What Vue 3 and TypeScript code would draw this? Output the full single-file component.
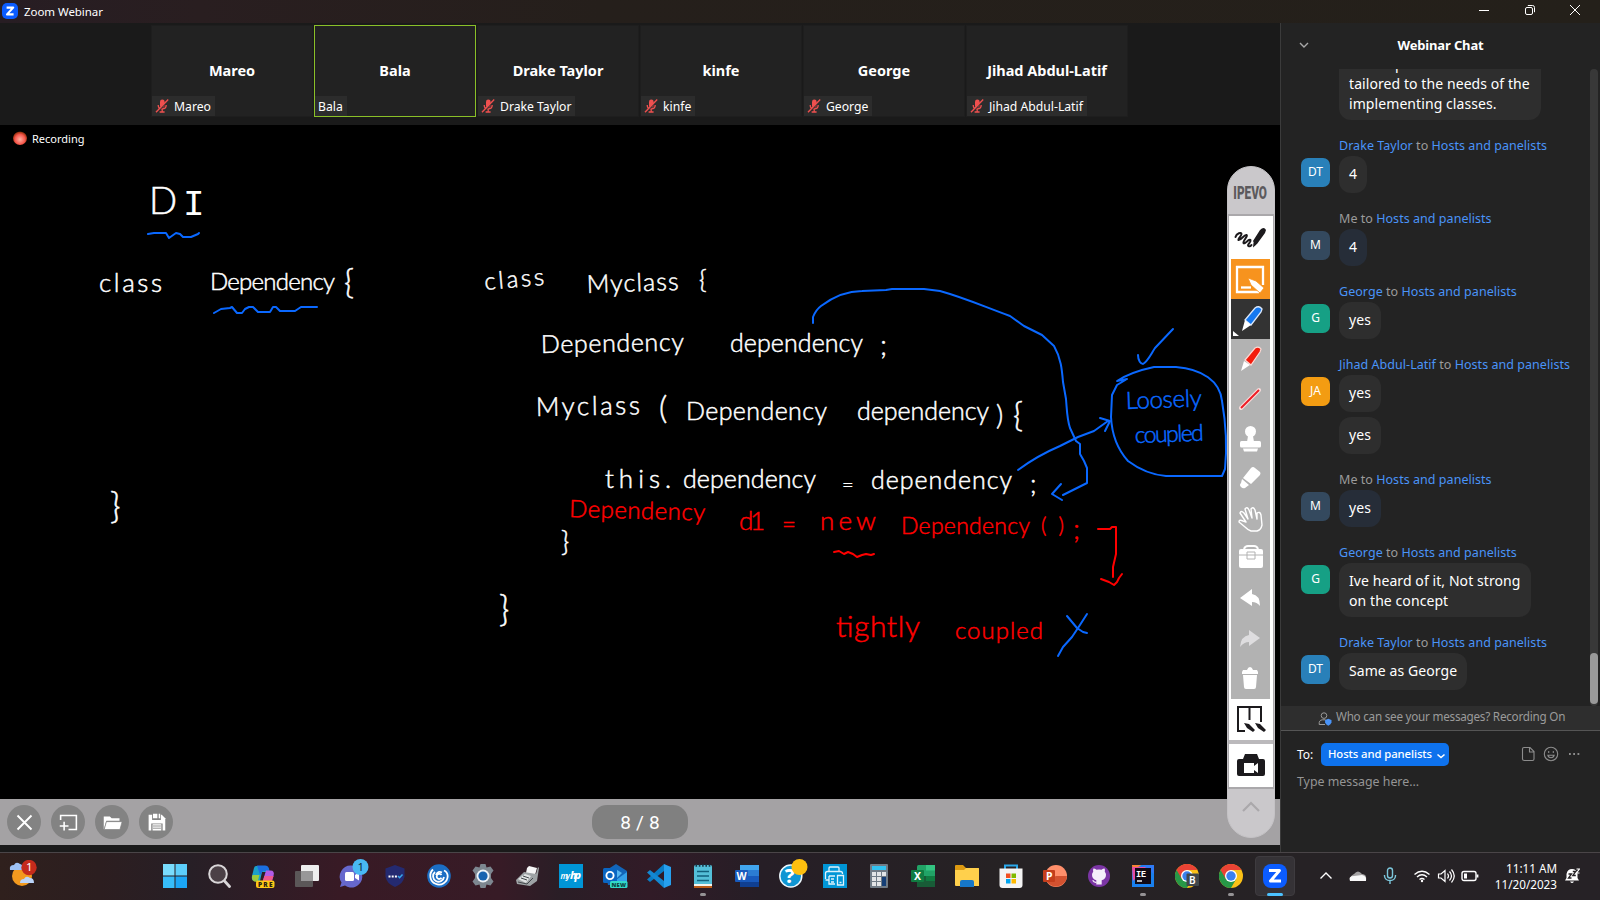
<script setup lang="ts">
interface Participant { name: string; muted: boolean; active?: boolean }
interface Group { from: string; mine?: boolean; initials: string; color: string; texts: string[] }
interface Note { t: string; x: number; y: number; w: number; s: number; c?: string; r?: number }

const participants: Participant[] = [
  { name: 'Mareo', muted: true },
  { name: 'Bala', muted: false, active: true },
  { name: 'Drake Taylor', muted: true },
  { name: 'kinfe', muted: true },
  { name: 'George', muted: true },
  { name: 'Jihad Abdul-Latif', muted: true },
]

const groups: Group[] = [
  { from: 'Drake Taylor', initials: 'DT', color: 'blue', texts: ['4'] },
  { from: 'Me', mine: true, initials: 'M', color: 'slate', texts: ['4'] },
  { from: 'George', initials: 'G', color: 'green', texts: ['yes'] },
  { from: 'Jihad Abdul-Latif', initials: 'JA', color: 'orange', texts: ['yes', 'yes'] },
  { from: 'Me', mine: true, initials: 'M', color: 'slate', texts: ['yes'] },
  { from: 'George', initials: 'G', color: 'green', texts: ['Ive heard of it, Not strong\non the concept'] },
  { from: 'Drake Taylor', initials: 'DT', color: 'blue', texts: ['Same as George'] },
]

const notes: Note[] = [
  { t: 'D', x: 149, y: 214, w: 0, s: 37 },
  { t: 'I', x: 183, y: 215, w: 0, s: 36, c: 'serifed' },
  { t: 'class', x: 99, y: 292, w: 63, s: 26 },
  { t: 'Dependency', x: 210, y: 290, w: 125, s: 24 },
  { t: '{', x: 344, y: 294, w: 0, s: 34 },
  { t: '}', x: 110, y: 518, w: 0, s: 36 },
  { t: 'class', x: 485, y: 290, w: 60, s: 24, r: -5 },
  { t: 'Myclass', x: 587, y: 293, w: 92, s: 25, r: -2 },
  { t: '{', x: 699, y: 289, w: 0, s: 26 },
  { t: 'Dependency', x: 541, y: 353, w: 143, s: 25, r: -1 },
  { t: 'dependency', x: 730, y: 352, w: 133, s: 25 },
  { t: ';', x: 880, y: 355, w: 0, s: 28 },
  { t: 'Myclass', x: 536, y: 416, w: 104, s: 26, r: -1 },
  { t: '(', x: 659, y: 419, w: 0, s: 32 },
  { t: 'Dependency', x: 686, y: 420, w: 141, s: 25 },
  { t: 'dependency', x: 857, y: 420, w: 132, s: 25 },
  { t: ')', x: 996, y: 425, w: 0, s: 28 },
  { t: '{', x: 1013, y: 427, w: 0, s: 34 },
  { t: 'this.', x: 605, y: 488, w: 66, s: 26 },
  { t: 'dependency', x: 683, y: 488, w: 133, s: 25 },
  { t: '=', x: 842, y: 492, w: 0, s: 20 },
  { t: 'dependency', x: 871, y: 489, w: 141, s: 25 },
  { t: ';', x: 1030, y: 493, w: 0, s: 26 },
  { t: 'Dependency', x: 569, y: 517, w: 136, s: 24, c: 'red', r: 1.5 },
  { t: 'd1', x: 739, y: 530, w: 26, s: 26, c: 'red' },
  { t: '=', x: 782, y: 533, w: 0, s: 24, c: 'red' },
  { t: 'new', x: 820, y: 530, w: 56, s: 26, c: 'red' },
  { t: 'Dependency', x: 901, y: 534, w: 129, s: 23, c: 'red' },
  { t: '()', x: 1041, y: 533, w: 23, s: 21, c: 'red' },
  { t: ';', x: 1073, y: 539, w: 0, s: 28, c: 'red' },
  { t: '}', x: 561, y: 551, w: 0, s: 28 },
  { t: '}', x: 499, y: 621, w: 0, s: 35 },
  { t: 'tightly', x: 836, y: 637, w: 84, s: 30, c: 'red' },
  { t: 'coupled', x: 955, y: 639, w: 88, s: 24, c: 'red' },
  { t: 'Loosely', x: 1126, y: 409, w: 76, s: 24, c: 'ink', r: -2 },
  { t: 'coupled', x: 1135, y: 443, w: 69, s: 23, c: 'ink', r: -2 },
]
</script>

<template>
  <div class="screen">
    <header class="titlebar">
      <svg class="zlogo" viewBox="0 0 16 16"><rect width="16" height="16" rx="5" fill="#0b5cff" /><path d="M4.6 4.6h6.6l-6.2 6.8h6.6" fill="none" stroke="#fff" stroke-width="2.1" stroke-linejoin="round" /></svg>
      <span class="apptitle">Zoom Webinar</span>
      <div class="wincontrols">
        <svg viewBox="0 0 12 12"><path d="M1 6.5h10" /></svg>
        <svg viewBox="0 0 12 12"><rect x="1.5" y="3.5" width="7" height="7" rx="1.5" /><path d="M3.8 1.5h4.7a2 2 0 0 1 2 2v4.7" /></svg>
        <svg viewBox="0 0 12 12"><path d="M1 1l10 10M11 1L1 11" /></svg>
      </div>
    </header>

    <main class="body">
      <section class="meeting">
        <div class="gallery">
          <div v-for="p in participants" :key="p.name" class="tile" :class="{ active: p.active }">
            <div class="big">{{ p.name }}</div>
            <div class="tag">
              <svg v-if="p.muted" class="mic" viewBox="0 0 14 14"><rect x="5" y="0.6" width="4.6" height="8" rx="2.2" fill="#f0504f" /><path d="M3.2 6c0 5.200 8 5.200 8 0M7.200 10v3M4.600 13h5" fill="none" stroke="#f0504f" stroke-width="1.300" /><path d="M13.400 1.500L2.200 13.400" stroke="#2c2c2c" stroke-width="1.200" /><path d="M13.200 0.600L1 13.200" stroke="#f0504f" stroke-width="1.400" /></svg>
              <span>{{ p.name }}</span>
            </div>
          </div>
        </div>

        <div class="stage">
          <div class="recording"><i></i><span>Recording</span></div>
          <svg class="board" viewBox="0 125 1280 674">
            <text
              v-for="(n, i) in notes" :key="i" :x="n.x" :y="n.y" :font-size="n.s"
              :textLength="n.w || undefined" :class="n.c"
              :transform="n.r ? `rotate(${n.r} ${n.x} ${n.y})` : undefined"
            >{{ n.t }}</text>
            <g class="pen blue">
              <path d="M148 234l6-1h12l3 5 7-5 4 1 3 3h8l7-3 1-1" />
              <path d="M214 313l7-4 9-1 2-1 5 6h5l3-4 4-2h4l5 5h12l3-5h3l4 4h15l6-4h16" />
              <path d="M813 323v-6c2-5 4-8 8-11 12-9 27-15 41-15l24-1 6-1h32l16 2c25 7 40 14 70 25l14 10 18 9 12 11c7 12 8 24 9 36l3 17c1 12 1 20 4 29l6 13 4 3v10l4 7 3 7v15l-24 12" />
              <path d="M1061 484l-9 10 10 6" />
              <path d="M1018 470c16-12 28-18 42-24l18-9 16-6 14-10M1100 418l10 3-5 10" />
              <path d="M1127 379l-10 6-5 10-1 22c1 20 8 34 17 44 12 9 26 14 38 15h56l3-7c2-20 1-45-3-68-2-20-20-32-46-34h-22c-14 3-28 8-37 14l10-2" />
              <path d="M1138 355c0 6 3 9 5 9 5-3 8-10 12-16l18-19" />
              <path d="M1067 616l10 12 6 4 4 1M1087 614l-9 14-6 9-9 10-5 9" />
            </g>
            <g class="pen crimson">
              <path d="M834 552l5-1 5 3 4-2 5 2 4 3 5-2 4-1 5 1 3-1" />
              <path d="M1098 529h12l2-2h4v27l-3 13v10M1101 579l8 3 5 3 3-3 2-4 3-4" />
            </g>
          </svg>

          <div class="bottombar">
            <div class="round"><svg viewBox="0 0 24 24"><path d="M4 4l16 16M20 4L4 20" fill="none" stroke="#fff" stroke-width="2.200" /></svg></div>
            <div class="round"><svg viewBox="0 0 24 24"><path d="M3 9V4h18v16h-9M7 11v10M2 16h10" fill="none" stroke="#fff" stroke-width="1.800" /></svg></div>
            <div class="round"><svg viewBox="0 0 24 24"><path d="M2 20V5h7l2 2h9v3H5z" fill="#fff" /><path d="M5 11h18l-2.500 9H2.500z" fill="#fff" stroke="#838383" stroke-width=".8" /></svg></div>
            <div class="round"><svg viewBox="0 0 24 24"><path d="M3 3h15l4 4v14H3z" fill="#fff" /><path d="M7 2v7h10V2M6 22v-9h13v9" fill="#838383" /><path d="M8 2h5v5H8zM14.500 2h1.700v5h-1.700zM7.500 14h10v7h-10z" fill="#fff" /><path d="M8 16h9M8 18.500h9" stroke="#838383" /></svg></div>
            <div class="pages">8 / 8</div>
          </div>

          <aside class="tools">
            <div class="brand"><span>IPEVO</span></div>
            <div class="rack">
              <div class="tool white scribble"><svg viewBox="0 0 40 40"><path d="M4.500 18c1-4 6-5 6-3s-4 5-3 6c2 1 6-6 8-5s-4 6-3 8 6-5 7-3-4 5-2 6 2 0 3-1" fill="none" stroke="#1c1a1d" stroke-width="2" stroke-linejoin="round" stroke-linecap="round" /><path d="M22 22l7-11q4-4 6 0l-1 3-8 11-2 1zM22.500 23.500l3 2-3.500 3z" fill="#1c1a1d" /></svg></div>
              <div class="tool amber"><svg viewBox="0 0 40 40"><path d="M28 33H6V8h26v18" fill="none" stroke="#fff" stroke-width="2.300" /><path d="M10 28.500h10" stroke="#fff" stroke-width="2.300" /><path d="M17 19l8 3 8 7-4 5-9-8z" fill="#fff" stroke="#f7931e" stroke-width=".8" /></svg></div>
              <div class="tool dark"><svg viewBox="0 0 40 40"><path d="M14 21l10-12q4-3 7 1l-1 3-10 13z" fill="#1478f0" stroke="#dce8fa" stroke-width="1.300" /><path d="M14 21l6 5-9 6z" fill="#fff" /><path d="M2 32v5h6z" fill="#fff" /></svg></div>
              <div class="tool"><svg viewBox="0 0 40 40"><path d="M14 21l10-12q4-2 6 1l-1 3-9 13z" fill="#f31b0b" stroke="#fbd8d3" stroke-width="1.200" /><path d="M13 22l6 4-9 6z" fill="#fff" /></svg></div>
              <div class="tool"><svg viewBox="0 0 40 40"><path d="M10 29l18-18" stroke="#fbdedd" stroke-width="4" stroke-linecap="round" /><path d="M10 29l18-18" stroke="#ed1c24" stroke-width="2" /></svg></div>
              <div class="tool"><svg viewBox="0 0 40 40" fill="#fff"><circle cx="19.500" cy="12.500" r="5.500" /><path d="M17 17h5l1 6h-7z" /><rect x="9" y="22" width="21" height="6.500" rx="1.500" /><path d="M12 29.500h15l-1 3H13z" /></svg></div>
              <div class="tool"><svg viewBox="0 0 40 40" fill="#fff"><path d="M20 9q2-2 4 0l5 4q1 1 0 3l-9 9-8-6zM11 20l7 6-4 3q-2 1-4-1-2-2 0-4z" /></svg></div>
              <div class="tool"><svg viewBox="0 0 40 40" fill="none" stroke="#fff" stroke-width="1.400" stroke-linejoin="round"><path d="M14 28l-6-5q0-3 4-1l3 1-6-9q1-3 4 0l4 6-3-10q2-3 4 1l3 8-1-9q2-3 4 1l2 9 0-6q3-2 4 2l1 10q-1 5-5 6h-6q-3-1-6-4z" /></svg></div>
              <div class="tool"><svg viewBox="0 0 40 40"><path d="M13 10q1-3 4-3h6q3 0 4 3" fill="none" stroke="#fff" stroke-width="2" /><rect x="8" y="10" width="24" height="19" rx="2" fill="#fff" /><path d="M8 16h8v-3h8v3h8M16 16v4h8v-4z" fill="none" stroke="#b2b2b2" /></svg></div>
              <div class="tool"><svg viewBox="0 0 40 40" fill="#fff"><path d="M9 19l12-9v5q8 1 8 12-3-4-8-4v4z" /></svg></div>
              <div class="tool"><svg viewBox="0 0 40 40" fill="#dedddf"><path d="M29 19l-11-8v5q-8 1-9 12 4-5 9-5v4z" /></svg></div>
              <div class="tool"><svg viewBox="0 0 40 40" fill="#fff"><path d="M11 13l1-2h4q1-3 3-3t3 3h4l1 2v2H11zM12 16h14l-1 12q0 2-2 2h-8q-2 0-2-2z" /></svg></div>
              <div class="tool white split"><svg viewBox="0 0 40 40"><path d="M14 31H7V7h23v15M18.500 7v13" fill="none" stroke="#1c1a1d" stroke-width="2" /><path d="M13 23l5 1 6 6-2 2-6-4zM24 23l5 1 6 6-2 2-6-4z" fill="#1c1a1d" /></svg></div>
              <div class="tool white camera"><svg viewBox="0 0 40 40"><path d="M6 15q0-2 2-2h4l2-5h12l2 5h4q2 0 2 2v13q0 2-2 2H8q-2 0-2-2z" fill="#1c1a1d" /><path d="M13 17h10v3l4-3v10l-4-3v3H13z" fill="#fff" /></svg></div>
            </div>
            <div class="foot"><svg viewBox="0 0 20 20"><path d="M2 14l8-8 8 8" fill="none" stroke="#aaa8ab" stroke-width="2.200" /></svg></div>
          </aside>
        </div>
      </section>

      <aside class="chat">
        <div class="chathead">
          <svg viewBox="0 0 10 10"><path d="M1 3l4 4 4-4" fill="none" stroke="#a8a8a8" stroke-width="1.400" /></svg>
          <b>Webinar Chat</b>
        </div>
        <div class="scroll">
          <div class="list">
            <div class="group">
              <div class="bubble first"><span class="tail">p</span><br>tailored to the needs of the<br>implementing classes.</div>
            </div>
            <div v-for="(g, i) in groups" :key="i" class="group">
              <div class="who"><span :class="{ me: g.mine }">{{ g.from }}</span> to <span>Hosts and panelists</span></div>
              <div class="row">
                <div class="avatar" :class="g.color">{{ g.initials }}</div>
                <div class="stack">
                  <div v-for="(t, j) in g.texts" :key="j" class="bubble" :class="{ mine: g.mine }">{{ t }}</div>
                </div>
              </div>
            </div>
          </div>
          <div class="track"><div class="thumb"></div></div>
        </div>
        <div class="notice">
          <svg viewBox="0 0 14 14"><circle cx="6" cy="3.600" r="2.800" fill="none" stroke="#9a9a9a" /><path d="M7 12.500H1.200q-.5-4.500 3.300-4.700h3" fill="none" stroke="#9a9a9a" /><path d="M10.300 6.800l3.200 1.200v2.500q-.5 2-3.200 3.300-2.700-1.300-3.200-3.300V8z" fill="#4a94f8" /></svg>
          <span>Who can see your messages? Recording On</span>
        </div>
        <div class="compose">
          <div class="torow">
            <span class="to">To:</span>
            <div class="target"><span>Hosts and panelists</span><svg viewBox="0 0 10 10"><path d="M1.500 4.500l3.500 3 3.500-3" fill="none" stroke="#fff" stroke-width="1.600" /></svg></div>
            <div class="acts">
              <svg viewBox="0 0 16 16"><path d="M4 1.500h6l4 4V13q0 1.500-1.500 1.500h-8Q2.500 14.500 2.500 13V3Q2.500 1.500 4 1.500zM9.500 1.500V6H14" /></svg>
              <svg viewBox="0 0 16 16"><circle cx="8" cy="8" r="6.700" /><path d="M5.700 5v2M10.300 5v2M4.800 9.200h6.400q-.5 2.600-3.200 2.600t-3.200-2.600z" /></svg>
              <svg viewBox="0 0 16 16"><path d="M3 8h1.800M7.200 8H9M11.500 8h1.800" stroke-width="1.800" /></svg>
            </div>
          </div>
          <div class="ph">Type message here...</div>
        </div>
      </aside>
    </main>

    <footer class="taskbar">
      <div class="weather">
        <svg viewBox="0 0 28 28"><circle cx="13" cy="16" r="10" fill="#f39a1f" /><path d="M1 10q-1-5 4-5 2-4 6-1 3 0 3 6z" fill="#9dc1f5" /><path d="M11 23q0-4 4-4 2-4 6-1 4 0 4 5z" fill="#bcd5fa" /><circle cx="20" cy="7.500" r="7.700" fill="#c42b1c" /></svg>
        <span>1</span>
      </div>
      <div class="apps">
        <div class="app"><svg viewBox="0 0 24 24" fill="#37bdf9"><path d="M0 0h11.500v11.500H0z" fill="#79dcfd" /><path d="M12.500 0H24v11.500H12.500z" fill="#5ccefb" /><path d="M0 12.500h11.500V24H0z" /><path d="M12.500 12.500H24V24H12.500z" fill="#1ba6f5" /></svg></div>
        <div class="app"><svg viewBox="0 0 24 24"><circle cx="11" cy="10" r="8.800" fill="#4b4046" stroke="#d9d6d8" stroke-width="2" /><path d="M17.500 17l5 5.500" stroke="#d9d6d8" stroke-width="2.800" stroke-linecap="round" /></svg></div>
        <div class="app"><svg viewBox="0 0 24 24"><path d="M5 2h8q3 0 4 3l-1 3h-5L9 17H4q-4 0-3-5l2-8q.5-2 2-2z" fill="#1ba0c8" /><path d="M6 1.500h8q3 0 4 3l.5 2.500H12L9 11z" fill="#1a6fe0" /><path d="M1.500 11h7L6.500 18Q.5 18 1 13z" fill="#9ccb3c" /><path d="M15 6.500h4.500q4.500 0 3 5.500l-2 6h-9z" fill="#b35ce8" /><path d="M13.500 12h9l-2 6h-9z" fill="#f0588e" /><rect x="5" y="16.500" width="18.500" height="7.500" rx="2" fill="#ffc917" /><text x="7" y="22.700" font-size="6.500" font-weight="900" fill="#272012" textLength="14.500">PRE</text></svg></div>
        <div class="app"><svg viewBox="0 0 24 24"><rect x="0" y="7" width="18" height="16" rx="1" fill="#5b5758" /><rect x="6" y="1" width="18" height="16" rx="1" fill="#eee" /><path d="M6 7h12v10H6z" fill="#989798" /></svg></div>
        <div class="app"><svg class="over" viewBox="0 0 24 24"><path d="M12 1.500a11 11 0 1 1-6 20L1 23l1.500-4.500A11 11 0 0 1 12 1.500z" fill="#6668cd" /><rect x="6" y="8" width="9" height="9" rx="1.500" fill="#fff" /><path d="M16 11l4-2.500v8L16 14z" fill="#fff" /><circle cx="21.500" cy="3" r="8" fill="#48b9f3" /><text x="18.500" y="7" font-size="11.500" fill="#122b3a">1</text></svg></div>
        <div class="app"><svg viewBox="0 0 24 24"><path d="M12 1l9.500 3.500v8q-1 7-9.500 10.500Q3.500 19.500 2.500 12.500v-8z" fill="#242a70" /><path d="M5.500 12.500h9" stroke="#fff" stroke-width="2" stroke-dasharray="2 1.200" /><path d="M15 12l1.600 1.700L19.500 10.500" fill="none" stroke="#38a8ec" stroke-width="1.500" /></svg></div>
        <div class="app"><svg viewBox="0 0 24 24"><circle cx="12" cy="12" r="11.800" fill="#1b6ec4" /><path d="M6 5.500A8.700 8.700 0 1 0 20.700 12Q20.500 8 17 6.500M8 8a5.500 5.500 0 1 0 9 5M15 8.500Q11 6.500 9 11M14.500 11a2.600 2.600 0 1 0 0 2.800" fill="none" stroke="#fff" stroke-width="1.800" /></svg></div>
        <div class="app"><svg viewBox="0 0 24 24"><path d="M9.500 0h5l1 3.500 4-1 3 4-2.500 3.500v4l2.500 3.500-3 4-4-1-1 3.500h-5l-1-3.500-4 1-3-4L4 14v-4L1.500 6.500l3-4 4 1z" fill="#7d8790" /><circle cx="12" cy="12" r="6.500" fill="#edf2f7" /><circle cx="12" cy="12" r="4.600" fill="#1763b0" /></svg></div>
        <div class="app"><svg viewBox="0 0 24 24"><path d="M12 4l2-2 8 2-2 7-9-2z" fill="#f6f6f6" /><path d="M1 16l8-8 12 2 2-7 1 1-2 13-7 5-13-2z" fill="#9ea3a5" /><path d="M3 15l7-5 6 2-5 7z" fill="#e0e3e3" /><path d="M6 14l6 2M8 12l6 2M3 18l9 2 6-6" fill="none" stroke="#44494c" /></svg></div>
        <div class="app"><svg viewBox="0 0 24 24"><path d="M0 0h24v24H0z" fill="#0096d6" /><text x="1.500" y="14.500" font-size="8" font-style="italic" font-weight="600" fill="#fff" textLength="9.500">my</text><text x="11" y="15" font-size="11" font-style="italic" font-weight="800" fill="#fff" textLength="11">hp</text></svg></div>
        <div class="app"><svg class="over" viewBox="0 0 24 24"><path d="M2 7L13 0l11 7v14H5z" fill="#1265b9" /><path d="M11 4l8 5-7 7z" fill="#55b5ef" /><path d="M13 16l11-8v14H13z" fill="#33a0ea" /><rect x="0" y="4" width="14" height="15" rx="1.500" fill="#0a66c2" /><circle cx="7" cy="11.500" r="3.600" fill="none" stroke="#fff" stroke-width="1.900" /><rect x="7" y="17" width="17.500" height="7" rx="1.500" fill="#31dac9" /><text x="8.500" y="22.800" font-size="5.800" font-weight="900" fill="#0c4542" textLength="14.500">NEW</text></svg></div>
        <div class="app"><svg viewBox="0 0 24 24"><path d="M17 0l7 3v18l-7 3z" fill="#26a0ee" /><path d="M17 0v7L3 18l-3-2.500z" fill="#087bc4" /><path d="M17 24v-7L3 6 0 8.500z" fill="#1388d2" /></svg></div>
        <div class="app run"><svg viewBox="0 0 24 24"><rect x="3" y="1" width="18" height="23" rx="1.500" fill="#54bfd8" /><path d="M3 20h18v2H3z" fill="#f5f4ee" /><path d="M3 22h18v2H3z" fill="#bb5b17" /><path d="M6 7.500h12M6 12h12M6 16.500h12" stroke="#11607c" stroke-width="1.400" /><path d="M4.500 1.500h15" stroke="#17394b" stroke-width="2.500" stroke-dasharray="1.600 1.700" /></svg></div>
        <div class="app"><svg viewBox="0 0 24 24"><rect x="5" y="1" width="19" height="22" rx="1.500" fill="#185abd" /><path d="M5 1h19v5.500H5z" fill="#41a5ee" /><path d="M5 6.500h19V12H5z" fill="#2b7cd3" /><path d="M5 18h19v5H5z" fill="#103f91" /><rect y="6" width="13" height="12" rx="1" fill="#185abd" /><text x="1.500" y="15.700" font-size="10.500" font-weight="700" fill="#fff">W</text></svg></div>
        <div class="app"><svg class="over" viewBox="0 0 24 24"><circle cx="11.800" cy="12" r="11" fill="#0f96d3" stroke="#eef8fd" stroke-width="1.500" /><text x="5.700" y="19.200" font-size="20" font-weight="800" fill="#fff">?</text><circle cx="20.500" cy="3" r="8" fill="#fdbf0f" /></svg></div>
        <div class="app"><svg viewBox="0 0 24 24"><path d="M0 0h24v24H0z" fill="#0096d6" /><path d="M6 7V4q0-1 1-1h8q1 0 1 1v3M4.500 7.500h13q2 0 2 2V10M2.500 15V9.500q0-2 2-2M2.500 16h3M6 12h6M6 12v8h6M14.500 11.500h6v9.500h-6zM8 15h3M8 18h3M16.500 18.500h2" fill="none" stroke="#dff3fc" stroke-width="1.300" /></svg></div>
        <div class="app"><svg viewBox="0 0 24 24"><rect x="3" width="18" height="24" rx="1" fill="#707b86" /><path d="M5 2h14v4H5z" fill="#31c2f1" /><path d="M5 8h4v4H5zM10 8h4v4h-4zM15 8h4v4h-4zM5 13h4v4H5zM10 13h4v4h-4zM5 18h4v4H5zM10 18h4v4h-4z" fill="#e3e5e7" /><path d="M15 13h4v9h-4z" fill="#153f77" /></svg></div>
        <div class="app"><svg viewBox="0 0 24 24"><rect x="6" y="1" width="18" height="22" rx="1.500" fill="#21a366" /><path d="M15 1h9v5.500h-9z" fill="#33c481" /><path d="M6 12h18v11H6z" fill="#185c37" /><path d="M15 12h9v5h-9z" fill="#107c41" /><rect y="6" width="13" height="12" rx="1" fill="#107c41" /><text x="3" y="15.700" font-size="10.500" font-weight="700" fill="#fff">X</text></svg></div>
        <div class="app"><svg viewBox="0 0 24 24"><path d="M0 2q0-1 1-1h7l3 3h13v5H0z" fill="#dd9a11" /><path d="M0 6h9l2-2h12q1 0 1 1v17H1q-1 0-1-1z" fill="#ffd04c" /><path d="M5 23v-5q0-2 2-2h10q2 0 2 2v5z" fill="#1677c8" /></svg></div>
        <div class="app"><svg viewBox="0 0 24 24"><path d="M6 6V1.500h12V6" fill="none" stroke="#2aa8ea" stroke-width="2" /><path d="M.5 4.500h23V21q0 3-3 3h-17q-3 0-3-3z" fill="#f4f4f4" /><path d="M7 9.500h4.500V14H7z" fill="#f25022" /><path d="M12.500 9.500H17V14h-4.500z" fill="#7fba00" /><path d="M7 15h4.500v4.500H7z" fill="#00a4ef" /><path d="M12.500 15H17v4.500h-4.500z" fill="#ffb900" /></svg></div>
        <div class="app"><svg viewBox="0 0 24 24"><circle cx="13" cy="12" r="11" fill="#ff8f6b" /><path d="M13 12h11a11 11 0 0 1-21 4z" fill="#d35230" /><rect y="6" width="12" height="12" rx="1" fill="#c43e1c" /><text x="3" y="15.700" font-size="10.500" font-weight="700" fill="#fff">P</text></svg></div>
        <div class="app"><svg viewBox="0 0 24 24"><circle cx="12" cy="12" r="11" fill="#7b35a4" /><path d="M9.300 20.500v-4.200Q5 15 5 10.800 5 9 6.200 7.700 5.800 6 6.400 4.500 8 4.600 9.500 5.700q2.500-.6 5 0 1.500-1.100 3.100-1.200.6 1.500.2 3.200Q19 9 19 10.800q0 4.200-4.300 5.500v4.200z" fill="#f5effa" /><path d="M9.500 18.300q-2.500.5-3.800-2" fill="none" stroke="#f5effa" stroke-width="1.200" /><rect x="7" y="8" width="10" height="6" rx="3" fill="#f5effa" /></svg></div>
        <div class="app run"><svg viewBox="0 0 24 24"><path d="M1 1l10 0-9 12z" fill="#f98637" /><path d="M9 1h14v11z" fill="#2f7af5" /><path d="M1 6l10-5 12 9v13H1z" fill="#1980ee" /><path d="M1 3l14 0-13 14z" fill="#e64ca3" /><path d="M4 4h16v16H4z" fill="#110a15" /><text x="5" y="12.500" font-size="8.500" font-weight="700" fill="#fff" class="mono">IE</text><path d="M6 17h5" stroke="#fff" stroke-width="1.400" /></svg></div>
        <div v-for="b in ['B', '']" :key="b" class="app" :class="{ run: !b }"><svg viewBox="0 0 24 24"><circle cx="12" cy="12" r="12" fill="#fbc116" /><path d="M1.600 6A12 12 0 0 0 12 24l5.200-9L12 12z" fill="#279847" /><path d="M1.600 6A12 12 0 0 1 22.400 6H12L6.800 15z" fill="#ea4335" /><circle cx="12" cy="12" r="6" fill="#fff" /><circle cx="12" cy="12" r="4.700" fill="#3b80ee" /><g v-if="b"><rect x="11.500" y="9.500" width="12.500" height="12.500" rx="1" fill="#41484b" /><text x="14" y="19.500" font-size="10" font-weight="600" fill="#fff">{{ b }}</text></g></svg></div>
        <div class="app current"><svg viewBox="0 0 24 24"><rect width="24" height="24" rx="8" fill="#0b5cff" /><path d="M6 6.500h10.500l-9 10.500H18" fill="none" stroke="#fff" stroke-width="3" stroke-linejoin="round" /></svg></div>
      </div>
      <div class="tray">
        <svg viewBox="0 0 16 16"><path d="M2.500 10.500L8 5l5.500 5.500" /></svg>
        <svg viewBox="0 0 16 16"><path d="M2 12q-3-4 2-6 4-5 8 0 5 0 4 6z" fill="#a3a1a2" stroke="none" /><path d="M0 13q-2-5 4-5l8-1q5 1 4 6z" fill="#f8f8f8" stroke="none" /></svg>
        <svg viewBox="0 0 16 16" class="cyan"><rect x="5.500" y="0" width="5" height="10" rx="2.500" /><path d="M2.500 7v1q.5 4.500 5.500 4.500T13.500 8V7M8 12.500V16" /></svg>
        <svg viewBox="0 0 16 16"><path d="M.5 6.500Q8 0 15.500 6.500M3 9q5-4.500 10 0M5.500 11.500q2.500-2 5 0" /><circle cx="8" cy="13" r="1.200" fill="#fff" stroke="none" /></svg>
        <svg viewBox="0 0 16 16"><path d="M.5 6h2.500l4-3.500v11L3 10H.5zM9.500 5.500q2 2.500 0 5M11.500 3.500q4 4.500 0 9M13.500 1.500q5.500 6.500 0 13" stroke-width="1.200" /></svg>
        <svg viewBox="0 0 16 16"><rect x="0" y="3.500" width="14" height="9" rx="2" /><path d="M15.500 6.500v3" stroke-width="1.800" /><path d="M2 5.500h3v5H2z" fill="#fff" stroke="none" /></svg>
      </div>
      <div class="clock"><div>11:11 AM</div><div>11/20/2023</div></div>
      <svg class="bell" viewBox="0 0 16 16"><path d="M1 12.500l1.500-2.500V6q1-5 5.500-5t5.500 5v4l1.500 2.500zM6 13.500h4q-2 3-4 0z" fill="#fff" /><path d="M4.500 6h3l-3 4h3M8.800 3.500h3l-3 4h3" fill="none" stroke="#262225" stroke-width="1.300" /><path d="M12.500 1h3l-3 4h3" fill="none" stroke="#fff" stroke-width="1.200" /></svg>
    </footer>
  </div>
</template>

<style>
body { margin: 0; background: #1a1a1a; }
</style>

<style scoped>
* { box-sizing: border-box; }
.screen { width: 1600px; height: 900px; overflow: hidden; display: flex; flex-direction: column; font-family: "Noto Sans", "Open Sans", sans-serif; color: #fff; background: #1a1a1a; }
svg { display: block; flex: none; }
.titlebar { height: 23px; flex: none; display: flex; align-items: center; padding-left: 2px; background: linear-gradient(90deg, #271d23, #291e20 200px, #251f1b 600px, #24201a 100%); }
.zlogo { width: 16px; height: 16px; margin-top: -1px; }
.apptitle { font-size: 11.5px; margin-left: 6px; letter-spacing: -.05px; white-space: nowrap; }
.wincontrols { margin-left: auto; display: flex; gap: 33.5px; padding: 0 19px 3px 0; }
.wincontrols svg { width: 12px; height: 12px; fill: none; stroke: #fff; stroke-width: 1; }
.body { height: 829px; flex: none; display: flex; }
.meeting { width: 1280px; flex: none; display: flex; flex-direction: column; }
.gallery { height: 102px; display: flex; gap: 1px; padding: 2px 0 0 151px; flex: none; }
.tile { width: 162px; height: 92px; background: #222; border: 1px solid #1e1e1e; position: relative; display: flex; flex-direction: column; justify-content: flex-end; align-items: flex-start; }
.tile.active { border-color: #8ac028; }
.big { position: absolute; inset: 0; display: flex; align-items: center; justify-content: center; font-weight: 700; font-size: 14.5px; letter-spacing: -.02px; padding-bottom: 2px; white-space: nowrap; }
.tag { position: relative; height: 20px; background: #2c2c2c; display: flex; align-items: center; font-size: 12.2px; padding: 0 4px 0 3px; gap: 5px; white-space: nowrap; }
.mic { width: 14px; height: 14px; }
.stage { position: relative; height: 720px; background: #000; flex: none; }
.recording { position: absolute; left: 13px; top: 3px; height: 20px; display: flex; align-items: center; gap: 5px; font-size: 11px; z-index: 1; }
.recording i { width: 14px; height: 14px; border-radius: 50%; background: radial-gradient(circle at 50% 60%, #ffb0a0, #f7574d 45%, #a33413 65%, transparent 75%); }
.board { width: 1280px; height: 674px; }
.board text { font-family: "Lato", sans-serif; font-weight: 300; fill: #fff; stroke: #fff; stroke-width: .5px; }
.board text.red { fill: #f00; stroke: #f00; }
.board text.ink { fill: #0a68ff; stroke: #0a68ff; }
.board text.serifed { font-family: "Liberation Mono", monospace; stroke: none; }
.pen { fill: none; stroke-width: 2; stroke-linejoin: round; stroke-linecap: round; }
.blue { stroke: #0a68ff; }
.crimson { stroke: #f00; }
.bottombar { height: 46px; background: #a4a2a4; display: flex; align-items: center; padding-left: 7px; gap: 10px; }
.round { width: 34px; height: 34px; border-radius: 50%; background: #838383; display: flex; align-items: center; justify-content: center; }
.round svg { width: 21px; height: 21px; }
.pages { margin-left: 409px; width: 96px; height: 34px; border-radius: 15px; background: #808080; display: flex; align-items: center; justify-content: center; font-family: Roboto, sans-serif; font-size: 19px; letter-spacing: .2px; }
.tools { position: absolute; left: 1227px; top: 41px; width: 48px; height: 672px; border-radius: 24px; overflow: hidden; background: #cac8cb; display: flex; flex-direction: column; border: 1px solid #c4c2c5; }
.brand { height: 47px; flex: none; padding-top: 4px; display: flex; align-items: center; justify-content: center; font-family: "Roboto", sans-serif; font-weight: 900; font-size: 19px; line-height: 24px; color: #5c5a5d; }
.brand span { transform: scaleX(.62); margin: 0 -10px 0 -12px; }
.rack { background: #fff; border: solid #aaa8ab; border-width: 2px 1px; padding: 0 3px 0 2px; }
.tool { height: 40px; background: #b2b2b2; display: flex; align-items: center; justify-content: center; }
.tool svg { width: 40px; height: 40px; }
.tool.white { background: #fff; }
.tool.scribble { height: 43px; align-items: flex-end; }
.tool.amber { background: #f7931e; }
.tool.dark { background: #333; }
.tool.split { height: 41px; }
.tool.camera { height: 47px; border-top: 4px solid #bbb9bc; margin: 0 -3px 0 -2px; }
.foot { flex: 1; display: flex; justify-content: center; padding: 8px 1px 0 0; }
.foot svg { width: 20px; height: 20px; }
.chat { flex: 1; border-left: 1px solid #3b3b3b; background: #232323; display: flex; flex-direction: column; }
.chathead { height: 46px; display: flex; align-items: center; position: relative; justify-content: center; font-size: 13px; padding-bottom: 3px; flex: none; }
.chathead b { letter-spacing: -.15px; }
.chathead svg { position: absolute; left: 18px; top: 17px; width: 10px; height: 10px; }
.scroll { height: 637px; flex: none; display: flex; overflow: hidden; }
.list { flex: 1; display: flex; flex-direction: column; justify-content: flex-end; gap: 16px; padding: 0 0 16px 20px; }
.group { flex: none; }
.who { height: 20px; margin: 0 0 0 38px; font-size: 12.5px; letter-spacing: .04px; line-height: 20px; color: #9b9b9b; white-space: nowrap; }
.who span { color: #4a94f8; }
.who span.me { color: #9b9b9b; }
.row { display: flex; gap: 9px; }
.avatar { width: 29px; height: 29px; margin-top: 2px; border-radius: 7px; font-size: 12px; display: flex; align-items: center; justify-content: center; padding-bottom: 3px; }
.avatar.blue { background: #2980b9; }
.avatar.slate { background: #34495e; }
.avatar.green { background: #16a085; }
.avatar.orange { background: #f39c12; }
.stack { display: flex; flex-direction: column; align-items: flex-start; gap: 5px; }
.bubble { min-height: 37px; border-radius: 12px; background: #2e2e2e; padding: 7.500px 10px 6.500px; line-height: 20px; font-size: 14px; letter-spacing: .08px; white-space: pre; }
.bubble.mine { background: #262d38; }
.bubble.first { width: 202px; margin-left: 38px; padding: 7px 10px 6px; }
.tail { padding-left: 46px; }
.track { width: 8px; margin-right: 2px; border-radius: 4px; background: #383838; display: flex; align-items: flex-end; padding-bottom: 2px; }
.thumb { width: 8px; height: 51px; border-radius: 4px; background: #999; }
.notice { height: 25px; flex: none; background: #2e2e2e; border-bottom: 1px solid #555; display: flex; align-items: center; padding-left: 37px; gap: 4px; font-size: 11.7px; letter-spacing: -.24px; color: #9b9b9b; white-space: nowrap; }
.notice svg { width: 14px; height: 14px; margin-top: 1px; }
.notice span { padding-bottom: 5px; }
.compose { padding: 12px 18px 0 16px; }
.torow { display: flex; align-items: center; height: 23px; font-size: 12px; }
.to { width: 24px; padding-bottom: 1px; }
.target { height: 23px; width: 128px; border-radius: 5px; background: #0e72ed; display: flex; align-items: center; padding-left: 7px; gap: 4px; font-weight: 500; font-size: 11.3px; letter-spacing: -.08px; white-space: nowrap; }
.target span { padding-bottom: 2px; }
.target svg { width: 10px; height: 10px; }
.acts { margin-left: auto; display: flex; gap: 7px; padding-bottom: 1px; }
.acts svg { width: 16px; height: 16px; fill: none; stroke: #8c8c8c; stroke-width: 1.1; }
.ph { margin-top: 6px; font-size: 12.4px; letter-spacing: -.02px; line-height: 20px; color: #959595; }
.taskbar { height: 48px; flex: none; border-top: 1px solid #4a4548; display: flex; align-items: center; background: linear-gradient(90deg, #2f201d, #2c1e20 100px, #271f26 190px, #381a25 340px, #371b26 500px, #2a1e26 560px, #311b27 650px, #261e26 760px, #262224 1000px, #262226 100%); }
.weather { width: 152.5px; padding-left: 9px; flex: none; position: relative; }
.weather svg { width: 28px; height: 28px; margin-top: -5px; }
.weather span { position: absolute; left: 26px; top: -6px; font-size: 11.5px; line-height: 16px; }
.apps { display: flex; margin-top: -1px; }
.apps text { font-family: "Noto Sans", sans-serif; }
.apps text.mono { font-family: "Liberation Mono", monospace; }
.app { width: 44px; height: 48px; display: flex; align-items: center; justify-content: center; position: relative; }
.app svg { width: 24px; height: 24px; }
.app svg.over { overflow: visible; }
.run::after, .current::after { content: ""; position: absolute; bottom: 4px; width: 6px; height: 3px; border-radius: 2px; background: #959395; }
.current::after { width: 16px; background: #4cc2ff; bottom: 4px; }
.current::before { content: ""; position: absolute; inset: 4px 2px; border-radius: 4px; background: #353236; border: 1px solid #3e3b3f; }
.current svg { position: relative; }
.tray { display: flex; margin: -1px 0 0 21.5px; }
.tray svg { width: 16px; height: 16px; margin-right: 16px; fill: none; stroke: #fff; stroke-width: 1.4; overflow: visible; }
.tray svg:nth-child(n+4) { margin-right: 8px; }
.tray svg.cyan { stroke: #7cc7dc; }
.clock { margin: -2px 0 0 auto; text-align: right; font-size: 11.7px; line-height: 16px; white-space: nowrap; }
.bell { width: 16px; height: 16px; margin: -2px 20px 0 7px; }
</style>
